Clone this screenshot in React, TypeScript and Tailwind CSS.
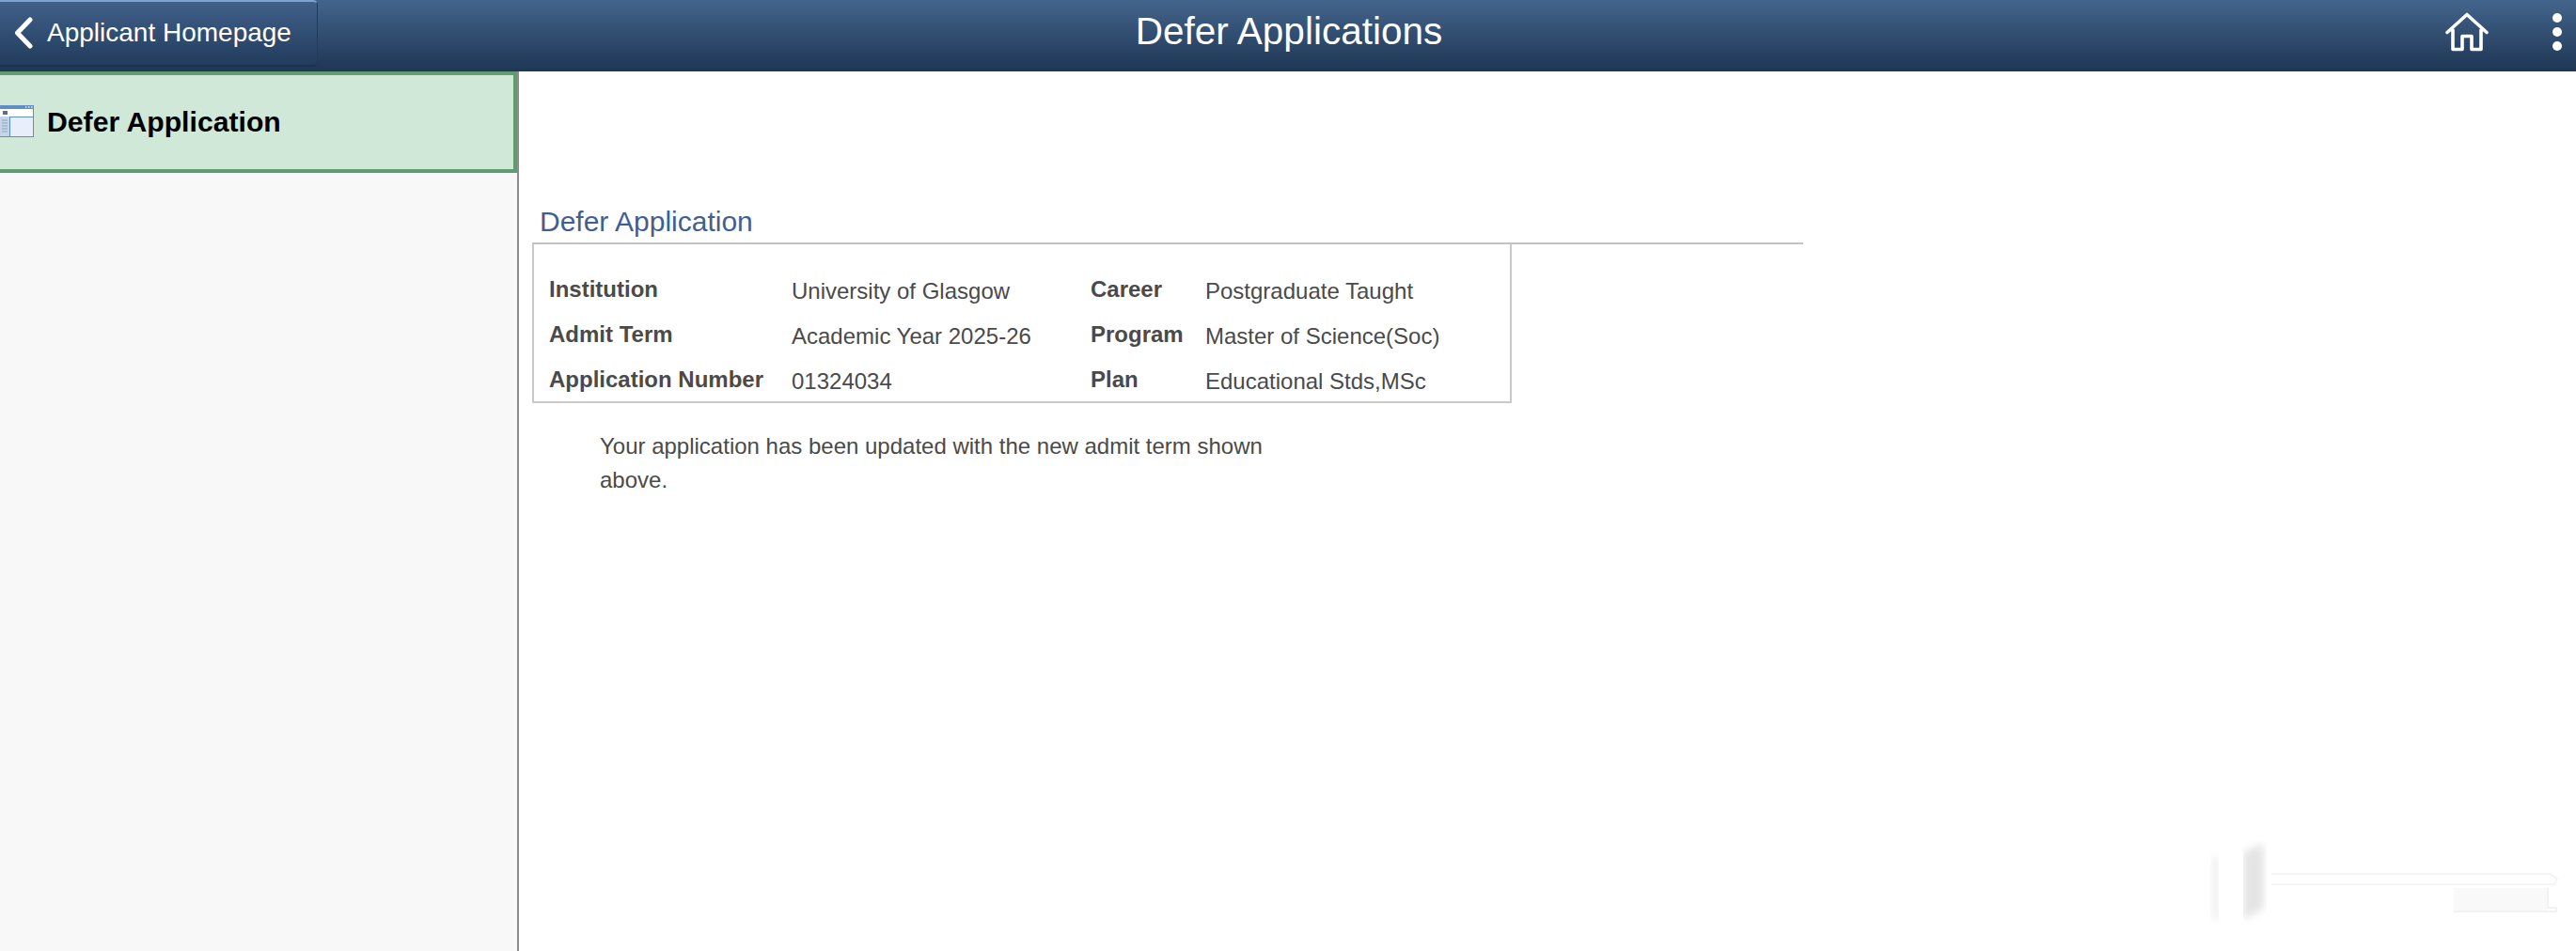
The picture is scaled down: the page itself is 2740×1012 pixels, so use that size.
const rows = [
  { label: "Institution", value: "University of Glasgow", label2: "Career", value2: "Postgraduate Taught" },
  { label: "Admit Term", value: "Academic Year 2025-26", label2: "Program", value2: "Master of Science(Soc)" },
  { label: "Application Number", value: "01324034", label2: "Plan", value2: "Educational Stds,MSc" },
];

function ChevronIcon() {
  return (
    <svg className="h-[34px] w-[22px] shrink-0" viewBox="0 0 22 34" fill="none">
      <path d="M18 3 4.5 17 18 31" stroke="white" strokeWidth="5" strokeLinecap="round" strokeLinejoin="round" />
    </svg>
  );
}

function HomeIcon() {
  return (
    <svg className="h-[42px] w-[46px]" viewBox="0 0 46 42" fill="none">
      <path
        d="M2 21.5 23 2.5l21 19M8 19V39.5h10V25.5h10V39.5h10V19"
        stroke="white"
        strokeWidth="3.6"
        strokeLinecap="round"
        strokeLinejoin="round"
      />
    </svg>
  );
}

function ComponentIcon() {
  return (
    <svg className="h-[36px] w-[36px] shrink-0" viewBox="0 0 36 36">
      <rect x="0" y="0" width="36" height="34" fill="#5f8fc2" />
      <rect x="0" y="4" width="35" height="8" fill="#fdfefe" />
      <rect x="3" y="6" width="5" height="4" fill="#5a6f8c" />
      <rect x="0" y="12" width="10" height="21" fill="#c5d4e6" />
      <rect x="11" y="13" width="24" height="20" fill="#e8effa" />
      <path d="M2 16h6M2 19h6M2 22h6M2 25h6M2 28h6" stroke="#8fa5bf" strokeWidth="1.2" />
      <path d="M27 2h1.5M30 2h1.5M33 2h1.5" stroke="#e8effa" strokeWidth="1.4" />
    </svg>
  );
}

function FadedMark() {
  return (
    <svg className="absolute bottom-[27px] right-0 h-[90px] w-[400px]" viewBox="0 0 400 90" fill="none">
      <defs>
        <filter id="soft">
          <feGaussianBlur stdDeviation="4" />
        </filter>
      </defs>
      <rect x="12" y="16" width="10" height="68" fill="#000" opacity="0.05" filter="url(#soft)" />
      <path d="M46 12 62 4 68 4V72L46 84Z" fill="#000" opacity="0.1" filter="url(#soft)" />
      <rect x="20" y="10" width="26" height="76" fill="#fff" />
      <path d="M76 35H372l8 5-3 6H76" stroke="#f1f1f1" strokeWidth="1.5" />
      <rect x="270" y="50" width="100" height="26" fill="#f9f9f9" />
      <path d="M370 50v21h9v4H270" stroke="#eeeeee" strokeWidth="1.5" />
    </svg>
  );
}

export default function App() {
  return (
    <div className="relative flex h-screen flex-col overflow-hidden bg-white font-['Liberation_Sans',Arial,sans-serif]">
      <header className="relative flex h-[76px] shrink-0 items-center justify-center bg-gradient-to-b from-[#44658c] to-[#1f3654] pb-[9px]">
        <a className="absolute left-0 top-0 flex h-[71px] w-[338px] items-center gap-[14px] whitespace-nowrap rounded-br-[5px] rounded-tr-[5px] border-r border-t-2 border-b-2 border-r-[#223b5a] border-t-[#7ba4cf] border-b-[#1c3350] bg-gradient-to-b from-[#41618a] to-[#223c5c] pb-[2px] pl-[14px] text-[28px] text-white">
          <ChevronIcon />
          <span>Applicant Homepage</span>
        </a>
        <h1 className="pl-[2px] text-[40.5px] font-normal text-white">Defer Applications</h1>
        <div className="absolute right-[15px] top-0 flex h-full items-center gap-[68px] pb-[9px]">
          <HomeIcon />
          <div className="flex flex-col gap-[5px]">
            <span className="h-[10px] w-[10px] rounded-full bg-white" />
            <span className="h-[10px] w-[10px] rounded-full bg-white" />
            <span className="h-[10px] w-[10px] rounded-full bg-white" />
          </div>
        </div>
      </header>

      <div className="flex min-h-0 flex-1">
        <aside className="w-[552px] shrink-0 border-r-2 border-[#8c8c8c] bg-[#f8f8f8]">
          <div className="flex h-[108px] items-center gap-[14px] border-4 border-l-0 border-[#5f9c70] bg-[#cfe8d8]">
            <ComponentIcon />
            <span className="text-[30.2px] font-bold text-black">Defer Application</span>
          </div>
        </aside>

        <main className="flex-1 pl-[14px] pt-[142px]">
          <section className="w-[1352px]">
            <h2 className="h-[42px] border-b-2 border-[#c3c3c3] pl-[8px] text-[30px] font-normal leading-[36px] text-[#3f5f92]">
              Defer Application
            </h2>
            <div className="w-[1042px] border-2 border-t-0 border-[#c9c9c9] px-[16px] pt-[24px] text-[24px] leading-[48px] text-[#4a4a4a]">
              {rows.map((row) => (
                <div className="flex h-[47.8px] items-center" key={row.label}>
                  <span className="w-[258px] font-bold">{row.label}</span>
                  <span className="w-[318px] pt-[5px]">{row.value}</span>
                  <span className="w-[122px] font-bold">{row.label2}</span>
                  <span className="pt-[5px]">{row.value2}</span>
                </div>
              ))}
            </div>
            <p className="ml-[72px] mt-[28px] w-[730px] text-[24px] leading-[36px] text-[#4a4a4a]">
              Your application has been updated with the new admit term shown above.
            </p>
          </section>
        </main>
      </div>

      <FadedMark />
    </div>
  );
}
